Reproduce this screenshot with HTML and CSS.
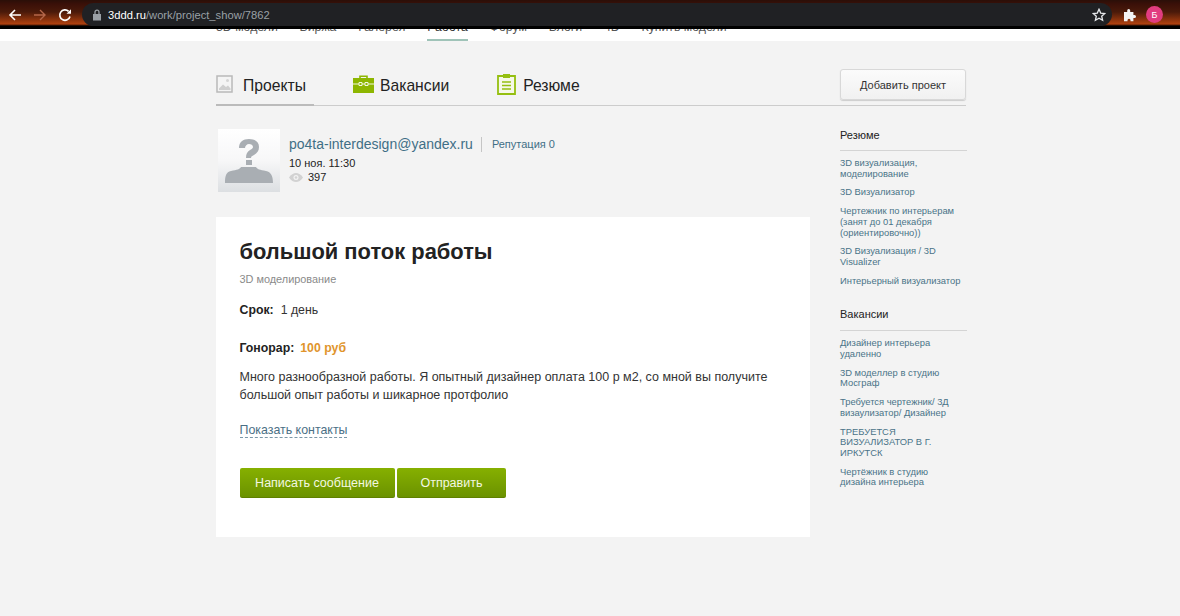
FILE: index.html
```html
<!DOCTYPE html>
<html lang="ru">
<head>
<meta charset="utf-8">
<title>большой поток работы</title>
<link rel="stylesheet" href="styles.css">
</head>
<body>
<header class="chrome">
  <div class="chrome-nav">
    <svg class="ico" width="16" height="16" viewBox="0 0 16 16"><path d="M14 8H3M8 3L3 8l5 5" fill="none" stroke="#fff" stroke-width="1.6"/></svg>
    <svg class="ico" width="16" height="16" viewBox="0 0 16 16"><path d="M2 8h11M8 3l5 5-5 5" fill="none" stroke="#b5674a" stroke-width="1.4"/></svg>
    <svg class="ico" width="16" height="16" viewBox="0 0 16 16"><path d="M13 9.500A5.200 5.200 0 1 1 11.600 4.300" fill="none" stroke="#fff" stroke-width="1.700"/><path d="M9.500 6.800h4.500V2.300z" fill="#fff"/></svg>
  </div>
  <div class="omnibox">
    <svg class="lock" width="10" height="12" viewBox="0 0 10 12"><path d="M1 5h8v6.500H1z" fill="#9aa0a6"/><path d="M3 5V3.200a2 2 0 0 1 4 0V5" fill="none" stroke="#9aa0a6" stroke-width="1.300"/></svg>
    <span class="url"><b>3ddd.ru</b>/work/project_show/7862</span>
    <svg class="star" width="14" height="14" viewBox="0 0 14 14"><path d="M7 1.300l1.700 3.800 4.100.4-3.100 2.700.9 4.100L7 10.200l-3.600 2.100.9-4.100-3.100-2.700 4.100-.4z" fill="none" stroke="#e8eaed" stroke-width="1.300"/></svg>
  </div>
  <div class="chrome-end">
    <svg width="14" height="14" viewBox="0 0 14 14"><path d="M1 4h3.200V2.600a1.500 1.500 0 0 1 3 0V4h3.200v3h1.100a1.500 1.500 0 0 1 0 3h-1.100v3.200H7.500v-1a1.500 1.500 0 0 0-3 0v1H1z" fill="#f4f4f4"/></svg>
    <span class="avatar-badge">Б</span>
  </div>
</header>

<nav class="site-nav">
  <ul class="site-menu">
    <li>3D модели</li>
    <li>Биржа</li>
    <li>Галерея</li>
    <li class="current">Работа</li>
    <li>Форум</li>
    <li>Блоги</li>
    <li>4D</li>
    <li>Купить модели</li>
  </ul>
</nav>

<main class="page">
  <div class="tabs-row">
    <div class="tabs">
      <a class="tab tab-active">
        <svg width="18" height="18" viewBox="0 0 18 18"><path d="M1 1h15v16H1z" fill="#f4f4f4" stroke="#b9b9b9" stroke-width="1.500"/><path d="M3 13.500l4-4 3 2.500 2-1.500 2.500 3V15H3z" fill="#cfcfcf"/><circle cx="11.500" cy="5.500" r="1.500" fill="#d5d5d5"/></svg>
        <span>Проекты</span>
      </a>
      <a class="tab">
        <svg width="21" height="18" viewBox="0 0 21 18"><path d="M7 3V1.300h7V3" fill="none" stroke="#8db600" stroke-width="1.600"/><path d="M0 3h21v15H0z" fill="#8db600"/><path d="M0 9h6M9 9h3M15 9h6" stroke="#f2f7df" stroke-width="1"/><path d="M6 7.500h3v3H6zM12 7.500h3v3h-3z" fill="none" stroke="#f2f7df" stroke-width="1"/></svg>
        <span>Вакансии</span>
      </a>
      <a class="tab">
        <svg width="19" height="22" viewBox="0 0 19 22"><path d="M1 3h17v18H1z" fill="#f6f8e8" stroke="#95bf10" stroke-width="1.800"/><path d="M6 1h7v4H6z" fill="#95bf10"/><path d="M5 9h9M5 12.500h9M5 16h9" stroke="#95bf10" stroke-width="1.500"/></svg>
        <span>Резюме</span>
      </a>
    </div>
    <button class="btn-add" type="button">Добавить проект</button>
  </div>

  <div class="columns">
    <div class="content">
      <div class="author">
        <div class="userpic">
          <svg width="62" height="63" viewBox="0 0 62 63">
            <path d="M7 54c0-7 1-11 6-12 6-1 9-2 10-4h15c1 2 4 3 10 4 5 1 7 5 7 12z" fill="#a9aeb3"/>
            <path d="M21 19c0-6 4-9 10-9s10 3 10 8c0 4-2 6-5 8-2 1-3 1.500-3 3h-5c0-4 1-6 4-8 2-1 3-2 3-3 0-2-2-3-4-3s-4 2-4 4z" fill="#a9aeb3"/>
            <rect x="28" y="31" width="6" height="5" fill="#a9aeb3"/>
          </svg>
        </div>
        <div class="author-info">
          <div class="author-top">
            <a class="author-name">po4ta-interdesign@yandex.ru</a>
            <a class="reputation">Репутация 0</a>
          </div>
          <div class="author-date">10 ноя. 11:30</div>
          <div class="author-views">
            <svg width="14" height="9" viewBox="0 0 14 9"><path d="M0 4.500C2 1.500 4.500 0 7 0s5 1.500 7 4.500C12 7.500 9.500 9 7 9S2 7.500 0 4.500z" fill="#d2d2d2"/><circle cx="7" cy="4.500" r="2.500" fill="#f3f3f3"/><circle cx="7" cy="4.500" r="1.300" fill="#d2d2d2"/></svg>
            <span>397</span>
          </div>
        </div>
      </div>

      <article class="card">
        <h1 class="title">большой поток работы</h1>
        <div class="category">3D моделирование</div>
        <div class="field field-term"><b>Срок:</b><span>1 день</span></div>
        <div class="field field-fee"><b>Гонорар:</b><b class="price">100 руб</b></div>
        <p class="descr">Много разнообразной работы. Я опытный дизайнер оплата 100 р м2, со мной вы получите большой опыт работы и шикарное протфолио</p>
        <a class="contacts">Показать контакты</a>
        <div class="actions">
          <button class="btn-green btn-msg" type="button">Написать сообщение</button>
          <button class="btn-green btn-send" type="button">Отправить</button>
        </div>
      </article>
    </div>

    <aside class="sidebar">
      <section class="side-block">
        <h2 class="side-title">Резюме</h2>
        <ul class="side-list">
          <li>3D визуализация, моделирование</li>
          <li>3D Визуализатор</li>
          <li>Чертежник по интерьерам (занят до 01 декабря (ориентировочно))</li>
          <li>3D Визуализация / 3D Visualizer</li>
          <li>Интерьерный визуализатор</li>
        </ul>
      </section>
      <section class="side-block">
        <h2 class="side-title">Вакансии</h2>
        <ul class="side-list">
          <li>Дизайнер интерьера удаленно</li>
          <li>3D моделлер в студию Мосграф</li>
          <li>Требуется чертежник/ 3Д визаулизатор/ Дизайнер</li>
          <li>ТРЕБУЕТСЯ ВИЗУАЛИЗАТОР В Г. ИРКУТСК</li>
          <li>Чертёжник в студию дизайна интерьера</li>
        </ul>
      </section>
    </aside>
  </div>
</main>
</body>
</html>
```
FILE: styles.css
```css
* { box-sizing: border-box; }
html, body { margin: 0; padding: 0; }
body {
  height: 616px;
  overflow: hidden;
  background: #f3f3f3;
  font-family: "Liberation Sans", Arial, sans-serif;
  color: #222;
}
ul { list-style: none; margin: 0; padding: 0; }

.chrome {
  height: 29px;
  display: flex;
  align-items: flex-start;
  padding-top: 3px;
  background: linear-gradient(to bottom, #2a0f08 0, #3a1008 4px, #4a1a0a 12px, #b0410f 24px, #000 26px, #000 29px);
  border-bottom: 3px solid #000;
}
.chrome-nav {
  width: 82px;
  height: 23px;
  display: flex;
  align-items: center;
  gap: 9px;
  padding-left: 7px;
}
.omnibox {
  width: 1030px;
  height: 23px;
  display: flex;
  align-items: center;
  background: #202124;
  border-radius: 12px;
  padding: 0 6px 0 10px;
}
.lock { margin-right: 6px; }
.url { flex: 1; font-size: 11.200px; color: #9aa0a6; }
.url b { color: #fff; font-weight: 400; }
.chrome-end { display: flex; align-items: center; gap: 9px; height: 23px; padding-left: 11px; }
.avatar-badge {
  width: 17px; height: 17px; border-radius: 50%;
  background: #e13d80; color: #fff; font-size: 9px;
  display: flex; align-items: center; justify-content: center;
}

.site-nav { height: 12px; background: #fff; overflow: hidden; }
.site-menu {
  display: flex;
  margin-top: -9px;
  padding-left: 216px;
  font-size: 12.300px;
  line-height: 14px;
  color: #555;
  gap: 21.800px;
}
.site-menu li { position: relative; height: 21px; }
.site-menu .current { color: #333; }
.current::after {
  content: "";
  position: absolute;
  left: 0; right: 0; top: 19px;
  height: 2px;
  background: #9fc3b8;
}

.page { width: 750px; margin-left: 216px; }

.tabs-row {
  height: 65px;
  padding-top: 28px;
  display: flex;
  justify-content: space-between;
  align-items: flex-start;
  border-bottom: 1px solid #ccc;
}
.tabs { display: flex; }
.tab {
  height: 37px;
  display: flex;
  align-items: flex-start;
  gap: 8px;
  font-size: 15.700px;
  line-height: 34px;
  color: #222;
}
.tab svg { margin-top: 6px; flex: none; }
.tab-active {
  width: 98px;
  border-bottom: 2px solid #bbb;
  margin-right: 39px;
  gap: 9px;
}
.tab:nth-child(2) { margin-right: 48px; gap: 6px; }
.tab:nth-child(3) { gap: 7px; }
.tab:nth-child(3) svg { margin-top: 4px; }
.btn-add {
  width: 126px;
  height: 31px;
  background: linear-gradient(#fbfbfb, #f1f1f1);
  border: 1px solid #d8d8d8;
  border-radius: 3px;
  box-shadow: 0 1px 1px #ccc;
  font: 11px "Liberation Sans", Arial, sans-serif;
  color: #333;
  padding: 0;
}

.columns { display: flex; gap: 30px; align-items: flex-start; }
.content { width: 594px; flex: none; }

.author { display: flex; padding: 23px 0 0 2px; height: 111px; }
.userpic {
  width: 62px; height: 63px; flex: none;
  background: linear-gradient(#fff 0, #f7f7f8 50%, #dcdfe2 100%);
  margin-right: 9px;
}
.author-top { display: flex; align-items: center; height: 17px; margin-top: 7px; }
.author-name { font-size: 14px; color: #3f6f86; line-height: 17px; }
.reputation {
  font-size: 11px; color: #3f6f86;
  border-left: 1px solid #c5c5c5;
  margin-left: 8px; padding-left: 10px;
  line-height: 15px;
}
.author-date { font-size: 11px; line-height: 14px; margin-top: 3px; color: #222; }
.author-views { font-size: 11px; line-height: 14px; display: flex; align-items: center; gap: 5px; color: #222; }

.card {
  height: 320px;
  background: #fff;
  padding: 22px 23.500px 0;
}
.title { margin: 0; font-size: 21.900px; line-height: 26px; font-weight: 700; color: #222; }
.category { font-size: 10.900px; line-height: 14px; color: #8a8a8a; margin-top: 7px; }
.field { font-size: 12.300px; line-height: 16px; color: #333; display: flex; gap: 7px; }
.field b { color: #222; }
.field-term { margin-top: 16px; }
.field-fee { margin-top: 22px; gap: 6px; }
.field-fee .price { color: #e0942b; }
.descr { margin: 12px 0 0; font-size: 12.500px; line-height: 18px; color: #333; width: 540px; }
.contacts {
  display: inline-block;
  margin-top: 20px;
  font-size: 12.400px; line-height: 13px;
  color: #4a6f85;
  border-bottom: 1px dashed #7a97a8;
}
.actions { display: flex; gap: 2.700px; margin-top: 30px; }
.btn-green {
  height: 30px;
  padding: 0;
  border: 0;
  border-radius: 2px;
  background: linear-gradient(#86b000, #6b9200);
  border-bottom: 1px solid #5f8000;
  color: #f4f8e2;
  font: 12.500px "Liberation Sans", Arial, sans-serif;
}
.btn-msg { width: 155px; }
.btn-send { width: 108.500px; }

.sidebar { width: 127px; flex: none; padding-top: 22px; }
.side-block + .side-block { margin-top: 21px; }
.side-title {
  margin: 0 0 7px;
  font-size: 11px; font-weight: 400; line-height: 14px;
  color: #222;
  padding-bottom: 8px;
  border-bottom: 1px solid #d4d4d4;
}
.side-block + .side-block .side-title { padding-bottom: 9px; }
.side-list li {
  font-size: 9.400px; line-height: 10.700px;
  color: #4a7488;
  margin-bottom: 8px;
  padding-right: 4px;
}
```
